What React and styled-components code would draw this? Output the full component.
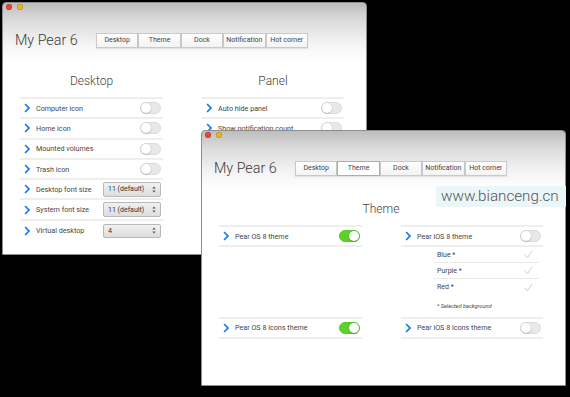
import React from 'react';
import styled, { createGlobalStyle } from 'styled-components';

const Global = createGlobalStyle`
  html, body { margin: 0; padding: 0; background: #000; }
  body { width: 570px; height: 397px; overflow: hidden; font-family: Roboto, "Liberation Sans", sans-serif; }
  * { box-sizing: border-box; }
`;

const Screen = styled.div`
  position: relative;
  width: 570px;
  height: 397px;
  background: #000;
  overflow: hidden;
`;

const Win = styled.div`
  position: absolute;
  left: ${p => p.$x}px;
  top: ${p => p.$y}px;
  width: 365px;
  height: ${p => p.$h}px;
  border: 1px solid #8e8e8e;
  border-radius: 4px 4px 0 0;
  background: linear-gradient(#bdbdbd 0px, #d9d9d9 16px, #f3f3f3 40px, #ffffff 58px);
  display: flex;
  flex-direction: column;
  overflow: hidden;
`;

const Lights = styled.div`
  display: flex;
  gap: 5px;
  margin: 1px 0 0 3px;
  height: 6px;
`;

const Light = styled.span`
  width: 6px;
  height: 6px;
  border-radius: 50%;
  background: ${p => p.$c};
  box-shadow: inset 0 0 0 0.5px rgba(0,0,0,0.25);
`;

const Header = styled.div`
  display: grid;
  grid-template-columns: 81px auto;
  align-items: center;
  margin-top: 22px;
  padding-left: 12px;
  height: 15px;
`;

const Title = styled.div`
  font-family: Roboto, "Liberation Sans", sans-serif;
  font-weight: 300;
  font-size: 14.3px;
  color: #3a3a3a;
  white-space: nowrap;
`;

const Tabs = styled.div`
  display: flex;
`;

const Tab = styled.div`
  width: 42.4px;
  height: 15px;
  display: flex;
  align-items: center;
  justify-content: center;
  font-size: 7px;
  color: #444;
  border: 1px solid ${p => (p.$active ? '#8fb0ee' : '#c9c9c9')};
  background: ${p => (p.$active ? '#ffffff' : 'linear-gradient(#ffffff, #f3f3f3)')};
  box-shadow: 0 1px 1px rgba(0,0,0,0.08);
  white-space: nowrap;
`;

const Columns = styled.div`
  display: grid;
  grid-template-columns: 143px 142px;
  column-gap: 39px;
  padding-left: 17px;
  margin-top: 27px;
`;

const Heading = styled.div`
  grid-column: ${p => (p.$wide ? '1 / span 2' : 'auto')};
  font-weight: 300;
  font-size: 12px;
  line-height: 15px;
  color: #444;
  text-align: center;
  margin-bottom: 8px;
  grid-row: 1;
`;

const Group = styled.div`
  border-top: 2px solid #eeeeee;
  align-self: start;
`;

const Row = styled.div`
  display: flex;
  align-items: center;
  height: 20.3px;
  padding: 0 2px 0 4px;
  border-bottom: ${p => (p.$last ? 'none' : '2px solid #eeeeee')};
`;

const Label = styled.div`
  flex: 1;
  font-size: 7.2px;
  color: #474747;
  white-space: nowrap;
  margin-left: 6px;
`;

const Chevron = () => (
  <svg width="6" height="10" viewBox="0 0 6 10">
    <path d="M1.1 1 L4.9 5 L1.1 9" fill="none" stroke="#1a7ef5" strokeWidth="1.8" />
  </svg>
);

const Track = styled.div`
  position: relative;
  width: 21px;
  height: 12px;
  border-radius: 6px;
  background: ${p => (p.$on ? '#5ad12c' : '#e8e8e8')};
  border: 1px solid ${p => (p.$on ? '#55c828' : '#dcdcdc')};
`;

const Knob = styled.div`
  position: absolute;
  top: 0px;
  left: ${p => (p.$on ? '9px' : '0px')};
  width: 10px;
  height: 10px;
  border-radius: 50%;
  background: #fff;
  box-shadow: 0 0.5px 1.5px rgba(0,0,0,0.3);
`;

const Toggle = ({ on }) => (
  <Track $on={on}>
    <Knob $on={on} />
  </Track>
);

const SelectBox = styled.div`
  width: 58px;
  height: 14.5px;
  border: 1px solid #b9b9b9;
  border-radius: 2px;
  background: linear-gradient(#f1f1f1, #dddddd);
  display: flex;
  align-items: center;
  justify-content: space-between;
  padding: 0 4px 0 4px;
  font-size: 7px;
  color: #333;
`;

const Arrows = () => (
  <svg width="4" height="7" viewBox="0 0 4 7">
    <path d="M0.3 2.6 L2 0.6 L3.7 2.6 Z M0.3 4.4 L2 6.4 L3.7 4.4 Z" fill="#555" />
  </svg>
);

const Select = ({ value }) => (
  <SelectBox>
    <span>{value}</span>
    <Arrows />
  </SelectBox>
);

const SubList = styled.div`
  margin: 0 4px 0 32px;
`;

const SubItem = styled.div`
  display: flex;
  align-items: center;
  justify-content: space-between;
  height: 16px;
  padding: 0 6px 0 4px;
  font-size: 7px;
  color: #444;
  border-bottom: ${p => (p.$last ? 'none' : '1px solid #e9e9e9')};
`;

const Check = () => (
  <svg width="9" height="9" viewBox="0 0 9 9">
    <path d="M1 5 L3.4 7.8 L8.2 0.8" fill="none" stroke="#cfcfcf" strokeWidth="1" />
  </svg>
);

const Note = styled.div`
  height: 21.4px;
  padding: 8px 0 0 36px;
  font-size: 5.6px;
  font-style: italic;
  color: #444;
`;

const Watermark = styled.div`
  position: absolute;
  left: 436px;
  top: 186px;
  width: 130px;
  height: 21px;
  background: #eaf6f7;
  font-family: Roboto, "Liberation Sans", sans-serif;
  font-weight: 300;
  font-size: 15.2px;
  line-height: 21px;
  color: #555;
  padding-left: 5px;
  white-space: nowrap;
  overflow: hidden;
`;

const tabNames = ['Desktop', 'Theme', 'Dock', 'Notification', 'Hot corner'];

const WindowFrame = ({ x, y, h, active, children }) => (
  <Win $x={x} $y={y} $h={h}>
    <Lights>
      <Light $c="#e2463b" />
      <Light $c="#e8b424" />
    </Lights>
    <Header>
      <Title>My Pear 6</Title>
      <Tabs>
        {tabNames.map(t => (
          <Tab key={t} $active={t === active}>{t}</Tab>
        ))}
      </Tabs>
    </Header>
    {children}
  </Win>
);

export default function App() {
  return (
    <>
      <Global />
      <Screen>
        <WindowFrame x={2} y={2} h={253} active="">
          <Columns>
            <Heading>Desktop</Heading>
            <Heading>Panel</Heading>
            <Group>
              <Row><Chevron /><Label>Computer icon</Label><Toggle /></Row>
              <Row><Chevron /><Label>Home icon</Label><Toggle /></Row>
              <Row><Chevron /><Label>Mounted volumes</Label><Toggle /></Row>
              <Row><Chevron /><Label>Trash icon</Label><Toggle /></Row>
              <Row><Chevron /><Label>Desktop font size</Label><Select value="11 (default)" /></Row>
              <Row><Chevron /><Label>System font size</Label><Select value="11 (default)" /></Row>
              <Row $last><Chevron /><Label>Virtual desktop</Label><Select value="4" /></Row>
            </Group>
            <Group>
              <Row><Chevron /><Label>Auto hide panel</Label><Toggle /></Row>
              <Row><Chevron /><Label>Show notification count</Label><Toggle /></Row>
              <Row><Chevron /><Label>Show clock</Label><Toggle /></Row>
            </Group>
          </Columns>
        </WindowFrame>

        <WindowFrame x={201} y={130} h={256} active="Theme">
          <Columns>
            <Heading $wide>Theme</Heading>
            <Group>
              <Row><Chevron /><Label>Pear OS 8 theme</Label><Toggle on /></Row>
            </Group>
            <Group>
              <Row><Chevron /><Label>Pear iOS 8 theme</Label><Toggle /></Row>
              <SubList>
                <SubItem>Blue *<Check /></SubItem>
                <SubItem>Purple *<Check /></SubItem>
                <SubItem $last>Red *<Check /></SubItem>
              </SubList>
              <Note>* Selected background</Note>
            </Group>
            <Group>
              <Row><Chevron /><Label>Pear OS 8 icons theme</Label><Toggle on /></Row>
            </Group>
            <Group>
              <Row><Chevron /><Label>Pear iOS 8 icons theme</Label><Toggle /></Row>
            </Group>
          </Columns>
        </WindowFrame>

        <Watermark>www.bianceng.cn</Watermark>
      </Screen>
    </>
  );
}
